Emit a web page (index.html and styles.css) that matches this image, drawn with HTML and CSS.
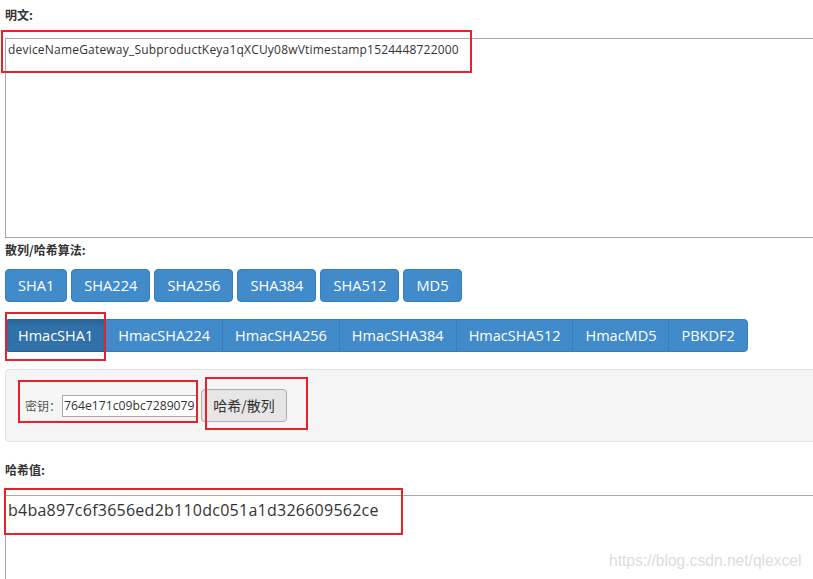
FILE: index.html
```html
<!DOCTYPE html>
<html lang="zh">
<head>
<meta charset="utf-8">
<title>Hash</title>
<link rel="stylesheet" href="styles.css">
</head>
<body>
<div class="page">
  <div class="label first">明文:</div>
  <div class="textarea plain">deviceNameGateway_SubproductKeya1qXCUy08wVtimestamp1524448722000</div>

  <div class="label second">散列/哈希算法:</div>
  <div class="btn-row">
    <span class="btn">SHA1</span>
    <span class="btn">SHA224</span>
    <span class="btn">SHA256</span>
    <span class="btn">SHA384</span>
    <span class="btn">SHA512</span>
    <span class="btn">MD5</span>
  </div>

  <div class="btn-group">
    <span class="gbtn active">HmacSHA1</span>
    <span class="gbtn">HmacSHA224</span>
    <span class="gbtn">HmacSHA256</span>
    <span class="gbtn">HmacSHA384</span>
    <span class="gbtn">HmacSHA512</span>
    <span class="gbtn">HmacMD5</span>
    <span class="gbtn">PBKDF2</span>
  </div>

  <div class="well">
    <span class="key-label">密钥：</span>
    <span class="key-input">764e171c09bc7289079</span>
    <span class="hash-btn">哈希/散列</span>
  </div>

  <div class="label third">哈希值:</div>
  <div class="textarea result">b4ba897c6f3656ed2b110dc051a1d326609562ce</div>
</div>

<div class="mark m1"></div>
<div class="mark m2"></div>
<div class="mark m3"></div>
<div class="mark m4"></div>
<div class="mark m5"></div>
<div class="watermark">https://blog.csdn.net/qlexcel</div>
</body>
</html>
```

FILE: styles.css
```css
html, body {
  margin: 0;
  padding: 0;
  background: #fff;
  overflow: hidden;
  width: 813px;
  height: 579px;
}
body {
  position: relative;
  font-family: "Open Sans", "Noto Sans CJK SC", sans-serif;
  color: #333;
}
.page {
  padding-left: 5px;
  width: 840px;
}
.label {
  font-family: "Noto Sans CJK SC", "Open Sans", sans-serif;
  font-weight: bold;
  font-size: 12px;
  line-height: 16px;
  color: #333;
}
.label.first { margin-top: 7px; margin-bottom: 15px; }
.label.second { margin-top: 4px; margin-bottom: 11px; }
.label.third { margin-top: 20px; margin-bottom: 17px; }

.textarea {
  box-sizing: border-box;
  border: 1px solid #a9a9a9;
  border-right: none;
  width: 830px;
  padding: 2px 2px;
  color: #333;
}
.plain {
  height: 200px;
  font-size: 12px;
  line-height: 18px;
  letter-spacing: 0.2px;
}
.result {
  height: 100px;
  font-size: 16px;
  line-height: 24px;
  padding-top: 2px;
  letter-spacing: 0.25px;
}

.btn-row {
  display: flex;
  gap: 4px;
}
.btn {
  display: block;
  height: 33px;
  box-sizing: border-box;
  padding: 0 12px;
  background: #428bca;
  border: 1px solid #357ebd;
  border-radius: 4px;
  color: #fff;
  font-size: 14.6px;
  line-height: 31px;
}

.btn-group {
  display: flex;
  margin-top: 17px;
}
.gbtn {
  display: block;
  height: 33px;
  box-sizing: border-box;
  padding: 0 12px;
  background: #428bca;
  border: 1px solid #357ebd;
  margin-left: -1px;
  color: #fff;
  font-size: 14.5px;
  line-height: 31px;
}
.gbtn:first-child {
  margin-left: 0;
  border-radius: 4px 0 0 4px;
}
.gbtn:last-child {
  border-radius: 0 4px 4px 0;
}
.gbtn.active {
  background: #3071a9;
  border-color: #285e8e;
  box-shadow: inset 0 3px 5px rgba(0,0,0,0.125);
}

.well {
  margin-top: 17px;
  box-sizing: border-box;
  height: 73px;
  width: 830px;
  background: #f5f5f5;
  border: 1px solid #e3e3e3;
  border-radius: 4px;
  display: flex;
  align-items: center;
  padding-left: 19px;
}
.key-label {
  font-family: "Noto Sans CJK SC", sans-serif;
  font-size: 12px;
  color: #555;
  width: 37px;
}
.key-input {
  box-sizing: border-box;
  width: 135px;
  height: 22px;
  background: #fff;
  border: 1px solid #a9a9a9;
  font-size: 12.2px;
  line-height: 20px;
  padding-left: 1px;
  overflow: hidden;
  white-space: nowrap;
  color: #333;
}
.hash-btn {
  box-sizing: border-box;
  margin-left: 4px;
  height: 33px;
  width: 86px;
  text-align: center;
  background: #e6e6e6;
  border: 1px solid #adadad;
  border-radius: 4px;
  font-family: "Noto Sans CJK SC", sans-serif;
  font-size: 14px;
  line-height: 31px;
  color: #333;
}

.mark {
  position: absolute;
  box-sizing: border-box;
  border: 2px solid #e8202a;
}
.m1 { left: 1px; top: 30px; width: 471px; height: 43px; }
.m2 { left: 5px; top: 312px; width: 101px; height: 49px; }
.m3 { left: 18px; top: 380px; width: 180px; height: 43px; }
.m4 { left: 205px; top: 377px; width: 103px; height: 53px; }
.m5 { left: 4px; top: 488px; width: 399px; height: 47px; }

.watermark {
  position: absolute;
  left: 609px;
  top: 552px;
  font-family: "Liberation Sans", sans-serif;
  font-size: 15.6px;
  color: #dcdcdc;
}
```
